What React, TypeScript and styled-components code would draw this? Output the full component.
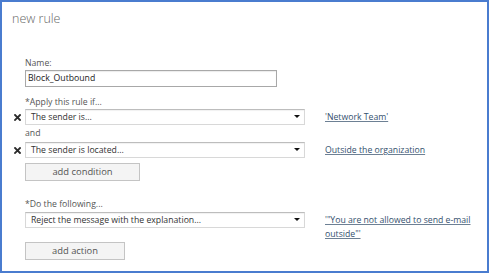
import React from 'react';
import styled, { createGlobalStyle } from 'styled-components';

const Global = createGlobalStyle`
  html, body { margin: 0; padding: 0; background: #fff; }
  body { font-family: "Open Sans", "Noto Sans", sans-serif; }
`;

const Frame = styled.div`
  box-sizing: border-box;
  width: 489px;
  height: 273px;
  border: 2px solid #4a7ccf;
  background: #fff;
  padding: 7px 0 0 10px;
  display: flex;
  flex-direction: column;
`;

const Title = styled.h1`
  margin: 0;
  font-size: 12.5px;
  line-height: 20px;
  font-weight: 300;
  color: #666;
`;

const Form = styled.div`
  display: flex;
  flex-direction: column;
  margin-top: 27px;
`;

const Row = styled.div<{ $mt?: number; $align?: string }>`
  display: grid;
  grid-template-columns: 13px 280px 20px 150px;
  align-items: ${(p) => p.$align ?? 'center'};
  margin-top: ${(p) => p.$mt ?? 0}px;
`;

const Label = styled.div`
  grid-column: 2 / -1;
  font-size: 8.7px;
  line-height: 14px;
  color: #555;
`;

const NameInput = styled.div`
  grid-column: 2;
  box-sizing: border-box;
  width: 252px;
  height: 17px;
  border: 1px solid #a8a8a8;
  box-shadow: inset 0 1px 1px rgba(0, 0, 0, 0.08);
  padding-left: 2px;
  font-size: 8.7px;
  line-height: 15px;
  color: #222;
`;

const RemoveCell = styled.div`
  grid-column: 1;
  display: flex;
  align-items: center;
  padding-left: 2px;
  height: 16px;
`;

const Select = styled.div`
  grid-column: 2;
  position: relative;
  box-sizing: border-box;
  height: 16px;
  border: 1px solid #d8d8d8;
  border-top-color: #bdbdbd;
  box-shadow: inset 0 1px 1px rgba(0, 0, 0, 0.06);
  padding-left: 5px;
  font-size: 8.7px;
  line-height: 14px;
  color: #333;
`;

const Caret = styled.span`
  position: absolute;
  right: 4px;
  top: 5px;
  width: 0;
  height: 0;
  border-left: 3px solid transparent;
  border-right: 3px solid transparent;
  border-top: 3.5px solid #111;
`;

const RuleLink = styled.a<{ $pt?: number }>`
  grid-column: 4;
  font-size: 8.7px;
  line-height: 14px;
  padding-top: ${(p) => p.$pt ?? 0}px;
  color: #34506e;
  text-decoration: underline;
  text-decoration-color: #6d8094;
  cursor: pointer;
`;

const Button = styled.button<{ $w: number }>`
  grid-column: 2;
  box-sizing: border-box;
  width: ${(p) => p.$w}px;
  height: 18px;
  padding: 0;
  background: #f4f4f4;
  border: 1px solid #c4c4c4;
  font-family: inherit;
  font-size: 9.4px;
  line-height: 16px;
  color: #555;
`;

const RemoveIcon = () => (
  <svg width="7" height="7" viewBox="0 0 7 7">
    <path d="M1 1 L6 6 M6 1 L1 6" stroke="#2a2a2a" strokeWidth="1.8" strokeLinecap="square" />
  </svg>
);

export default function App() {
  return (
    <>
      <Global />
      <Frame>
        <Title>new rule</Title>
        <Form>
          <Row>
            <Label>Name:</Label>
          </Row>
          <Row>
            <NameInput>Block_Outbound</NameInput>
          </Row>
          <Row $mt={8}>
            <Label>*Apply this rule if...</Label>
          </Row>
          <Row>
            <RemoveCell>
              <RemoveIcon />
            </RemoveCell>
            <Select>
              The sender is...
              <Caret />
            </Select>
            <RuleLink>'Network Team'</RuleLink>
          </Row>
          <Row $mt={1}>
            <Label>and</Label>
          </Row>
          <Row $mt={2}>
            <RemoveCell>
              <RemoveIcon />
            </RemoveCell>
            <Select>
              The sender is located...
              <Caret />
            </Select>
            <RuleLink>Outside the organization</RuleLink>
          </Row>
          <Row $mt={5}>
            <Button $w={115}>add condition</Button>
          </Row>
          <Row $mt={16}>
            <Label>*Do the following...</Label>
          </Row>
          <Row $mt={1} $align="start">
            <Select>
              Reject the message with the explanation...
              <Caret />
            </Select>
            <RuleLink $pt={1}>'"You are not allowed to send e-mail outside"'</RuleLink>
          </Row>
          <Row $mt={1}>
            <Button $w={100}>add action</Button>
          </Row>
        </Form>
      </Frame>
    </>
  );
}
